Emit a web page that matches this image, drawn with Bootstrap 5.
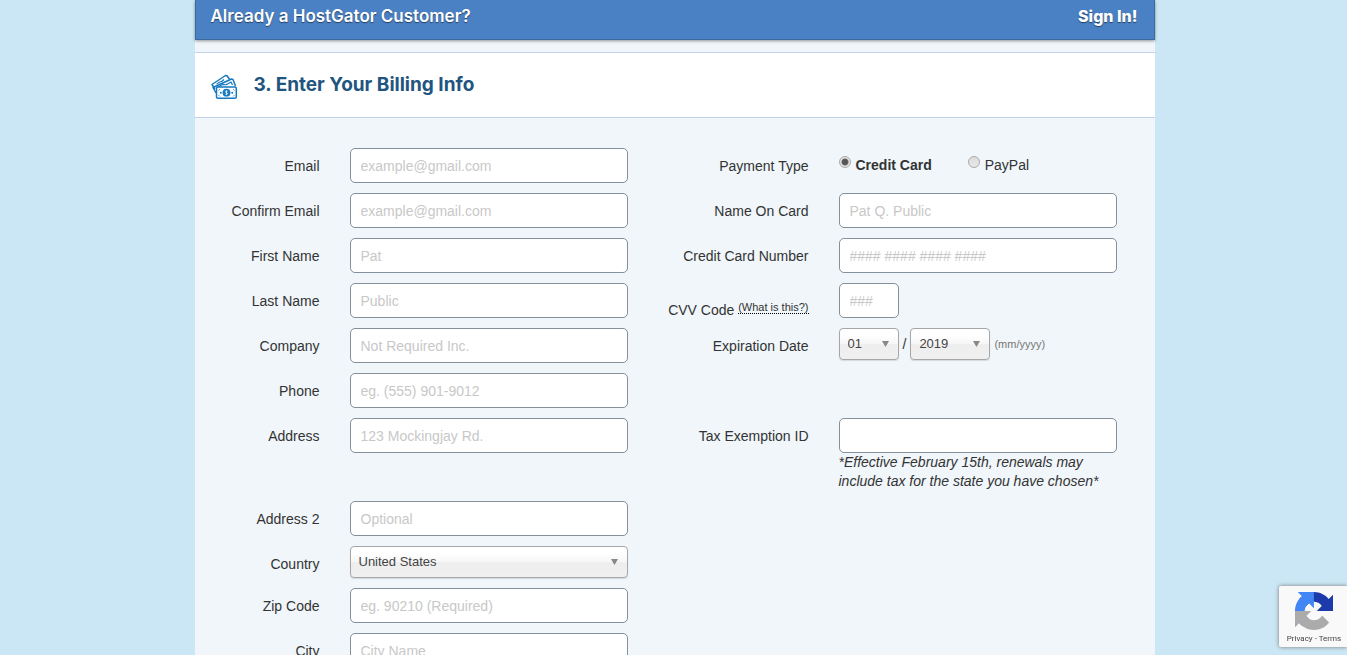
<!DOCTYPE html>
<html lang="en">
<head>
<meta charset="utf-8">
<meta name="viewport" content="width=device-width, initial-scale=1">
<title>Enter Your Billing Info</title>
<link href="https://cdn.jsdelivr.net/npm/bootstrap@5.3.0/dist/css/bootstrap.min.css" rel="stylesheet">
<style>
  body { background: #cbe7f5; color: #333; font: 14px/19px "Liberation Sans", Arial, sans-serif; padding-left: 2px; }
  .order-page { max-width: 960px; min-height: 100vh; background: #f0f6fa; }
  .signin-bar { height: 40px; padding: 0 16px 7px 15px; background: #4a80c4; border: 1px solid #3b6a9b; border-top: 0;
    box-shadow: 0 1px 3px rgba(0,0,0,.4); color: #fff; font-family: Inter, sans-serif; font-size: 17px; font-weight: 600;
    text-shadow: 0 1px 1px rgba(0,0,0,.5); }
  .signin-bar a { color: #fff; font-size: 16px; font-weight: 800; }
  .step-head { margin-top: 12px; height: 66px; padding: 0 16px; border: 1px solid #c2d2e8; border-width: 1px 0; background: #fff; }
  .step-head h2 { font: 700 19px/24px Inter, sans-serif; color: #1f557f; }
  .billing { display: grid; grid-template-columns: 433fr 457fr; column-gap: 32px; padding: 30px 38px 0 0; }
  .stack { display: flex; flex-direction: column; gap: 10px; min-width: 0; }
  .field { display: flex; gap: 30px; align-items: flex-start; }
  .field-label { flex: 0 0 125px; text-align: right; padding-top: 8px; line-height: 20px; white-space: nowrap; }
  .stack-wide .field-label { flex-basis: 149px; }
  .field-body { flex: 1 1 0; min-width: 0; }
  .form-control { height: 35px; padding: 0 10px; border: 1px solid #84909b; border-radius: 5px; font-size: 14px; line-height: 20px; color: #333; }
  .form-control::placeholder { color: #c8c8c8; }
  .form-select { height: 32px; padding: 0 24px 0 8px; border: 1px solid #a6a6a6; border-radius: 4px; color: #444; font-size: 13px; line-height: 20px;
    background: url("data:image/svg+xml,%3Csvg xmlns='http://www.w3.org/2000/svg' viewBox='0 0 7 6'%3E%3Cpath fill='%23888' d='M0 0h7L3.500 6z'/%3E%3C/svg%3E") no-repeat right 9px top 12px / 7px 6px,
      linear-gradient(#fff 20%, #f6f6f6 50%, #eee 52%, #f0f0f0); box-shadow: 0 1px 1px rgba(0,0,0,.12); }
  .month { width: 60px; }
  .year { width: 80px; }
  .stack-wide .cvv-label { padding-top: 18px; line-height: 16px; }
  .cvv-label a { font-size: 11px; line-height: 12px; color: #333; border-bottom: 1px dotted #000; vertical-align: 4px; }
  .hint { font-size: 11px; color: #777; }
  .pay-choice { height: 35px; line-height: 34px; }
  .pay-choice input { appearance: none; width: 12px; height: 12px; margin: 8px 5px 0 0; border: 1px solid #aaa; border-radius: 50%; background: linear-gradient(#ddd, #e8e8e8); }
  .pay-choice input:checked { background: radial-gradient(circle, #555 0 2px, #666 3px, #e4e4e4 4px); }
  .pay-choice input:checked + label { font-weight: 700; }
  .tall-row { margin-bottom: 38px; }
  .gap-row { margin-bottom: 48px; }
  .privacy-badge { right: 0; bottom: 8px; width: 68px; height: 61px; padding: 6px 0 0 2px; background: #f9f9f9; box-shadow: 0 0 4px #777; border-radius: 2px 0 0 2px;
    font: 8px/10px Roboto, sans-serif; color: #555; }
  .privacy-badge a { color: #444; }
  @media (max-width: 991px) { .billing { grid-template-columns: 1fr; row-gap: 30px; } .stack-wide .field-label, .field-label { flex-basis: 149px; } }
</style>
</head>
<body class="vh-100 overflow-hidden">
<main class="order-page mx-auto">
  <div class="signin-bar d-flex justify-content-between align-items-center">
    <span>Already a HostGator Customer?</span>
    <a href="#signin" class="text-decoration-none">Sign In!</a>
  </div>
  <header class="step-head d-flex align-items-center">
    <svg width="27" height="26" viewBox="1 1 27 26" class="flex-shrink-0 mt-1" fill="none" stroke="#1479c0" stroke-width="1.500" stroke-linejoin="round" aria-hidden="true">
      <path d="M5 16 2 11.500 15.500 2.500l1.500.2 2.500 3.500"/>
      <path d="M6.500 11c2-.5 2-2 3.500-2s3-1.500 4-2.500" stroke-width="1.200"/>
      <path d="M6 20 3 14.500 21.500 6l1.500.5 2.500 6.500"/>
      <path d="m7 15 4.500-3c2-1.500 3 1 6-1l3.500-2 1.500 3" stroke-width="1.200"/>
      <rect x="6.500" y="14" width="19.800" height="11.200" rx="1.500" fill="#fff"/>
      <path d="M8.500 17.500 10 16M24.500 17.500 23 16M8.500 22l1.500 1.500M24.500 22 23 23.500" stroke-width=".7"/>
      <circle cx="16.500" cy="19.700" r="3.900" fill="#1479c0" stroke="none"/>
      <path d="M17.700 18.300c-2.500-1-3 1-1.200 1.400 2 .4 1.200 2.400-1.200 1.400M16.500 17.300v4.800" stroke="#fff" stroke-width=".7"/>
      <circle cx="10.800" cy="19.700" r="1" fill="#1479c0" stroke="none"/><circle cx="22.200" cy="19.700" r="1" fill="#1479c0" stroke="none"/>
    </svg>
    <h2 class="mb-0 ms-3">3. Enter Your Billing Info</h2>
  </header>
  <form class="billing">
    <div class="stack">
      <div class="field"><label class="field-label" for="email">Email</label><div class="field-body"><input class="form-control" id="email" type="email" placeholder="example@gmail.com"></div></div>
      <div class="field"><label class="field-label" for="email2">Confirm Email</label><div class="field-body"><input class="form-control" id="email2" type="email" placeholder="example@gmail.com"></div></div>
      <div class="field"><label class="field-label" for="first">First Name</label><div class="field-body"><input class="form-control" id="first" placeholder="Pat"></div></div>
      <div class="field"><label class="field-label" for="last">Last Name</label><div class="field-body"><input class="form-control" id="last" placeholder="Public"></div></div>
      <div class="field"><label class="field-label" for="company">Company</label><div class="field-body"><input class="form-control" id="company" placeholder="Not Required Inc."></div></div>
      <div class="field"><label class="field-label" for="phone">Phone</label><div class="field-body"><input class="form-control" id="phone" type="tel" placeholder="eg. (555) 901-9012"></div></div>
      <div class="field"><label class="field-label" for="address">Address</label><div class="field-body tall-row"><input class="form-control" id="address" placeholder="123 Mockingjay Rd."></div></div>
      <div class="field"><label class="field-label" for="address2">Address 2</label><div class="field-body"><input class="form-control" id="address2" placeholder="Optional"></div></div>
      <div class="field"><label class="field-label" for="country">Country</label><div class="field-body"><select class="form-select" id="country"><option>United States</option></select></div></div>
      <div class="field"><label class="field-label" for="zip">Zip Code</label><div class="field-body"><input class="form-control" id="zip" placeholder="eg. 90210 (Required)"></div></div>
      <div class="field"><label class="field-label" for="city">City</label><div class="field-body"><input class="form-control" id="city" placeholder="City Name"></div></div>
    </div>
    <div class="stack stack-wide">
      <div class="field" role="radiogroup" aria-labelledby="paytype"><span class="field-label" id="paytype">Payment Type</span>
        <div class="field-body d-flex pay-choice">
          <div class="d-flex me-4 pe-2"><input type="radio" name="pay" id="card" checked><label for="card">Credit Card</label></div>
          <div class="d-flex ms-1"><input type="radio" name="pay" id="paypal"><label for="paypal">PayPal</label></div>
        </div></div>
      <div class="field"><label class="field-label" for="holder">Name On Card</label><div class="field-body"><input class="form-control" id="holder" placeholder="Pat Q. Public"></div></div>
      <div class="field"><label class="field-label" for="number">Credit Card Number</label><div class="field-body"><input class="form-control" id="number" placeholder="#### #### #### ####"></div></div>
      <div class="field"><div class="field-label cvv-label"><label for="cvv">CVV Code</label> <a href="#cvv-help" class="text-decoration-none">(What is this?)</a></div><div class="field-body"><input class="form-control month" id="cvv" placeholder="###"></div></div>
      <div class="field gap-row"><label class="field-label" for="month">Expiration Date</label>
        <div class="field-body d-flex align-items-center gap-1">
          <select class="form-select month" id="month"><option>01</option></select><span>/</span>
          <select class="form-select year" aria-label="Expiration year"><option>2019</option></select><span class="hint">(mm/yyyy)</span>
        </div></div>
      <div class="field"><label class="field-label" for="tax">Tax Exemption ID</label><div class="field-body"><input class="form-control" id="tax"><em class="d-block">*Effective February 15th, renewals may include tax for the state you have chosen*</em></div></div>
    </div>
  </form>
</main>
<aside class="privacy-badge position-fixed text-center">
  <svg class="d-block mx-auto" width="38" height="38" viewBox="0 0 64 64" aria-hidden="true">
    <path fill="#1c3aa9" d="M64 31.955l-.033-1.370V4.687l-7.160 7.160C50.948 4.674 42.033.093 32.050.093c-10.400 0-19.622 4.960-25.458 12.640l11.736 11.860a15.550 15.550 0 0 1 4.754-5.334c2.050-1.600 4.952-2.906 8.968-2.906.485 0 .860.057 1.135.163 4.976.393 9.288 3.140 11.828 7.124l-8.307 8.307z"/>
    <path fill="#4285f4" d="M31.862.094l-1.370.033H4.594l7.160 7.160C4.580 13.147 0 22.060 0 32.046c0 10.400 4.960 19.622 12.640 25.458L24.500 45.768a15.550 15.550 0 0 1-5.334-4.754c-1.600-2.050-2.906-4.952-2.906-8.968 0-.485.057-.860.163-1.135.393-4.976 3.140-9.288 7.124-11.828l8.307 8.307z"/>
    <path fill="#ababab" d="M0 32.045l.033 1.370v25.898l7.160-7.160c5.860 7.173 14.774 11.754 24.760 11.754 10.400 0 19.622-4.960 25.458-12.640l-11.736-11.860a15.550 15.550 0 0 1-4.754 5.334c-2.050 1.600-4.952 2.906-8.968 2.906-.485 0-.860-.057-1.135-.163-4.976-.393-9.288-3.140-11.828-7.124l8.307-8.307z"/>
  </svg>
  <div class="mt-1"><a href="#privacy" class="text-decoration-none">Privacy</a> - <a href="#terms" class="text-decoration-none">Terms</a></div>
</aside>
<script src="https://cdn.jsdelivr.net/npm/bootstrap@5.3.0/dist/js/bootstrap.bundle.min.js"></script>
</body>
</html>
